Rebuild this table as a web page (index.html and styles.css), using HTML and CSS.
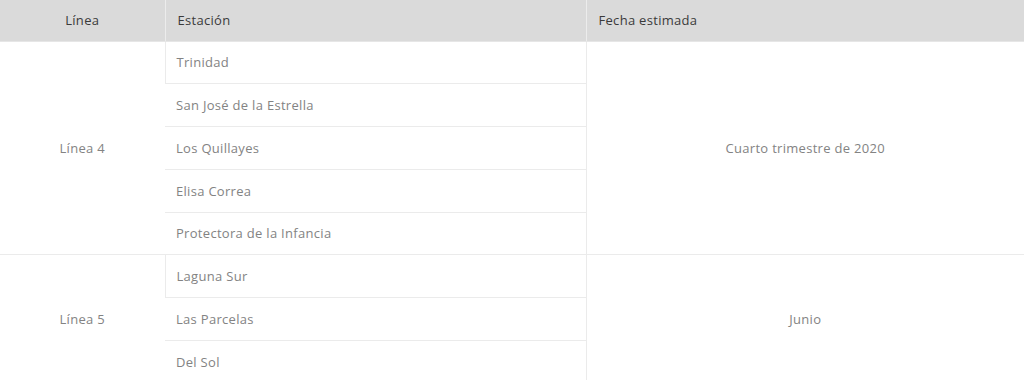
FILE: index.html
```html
<!DOCTYPE html>
<html lang="es">
<head>
<meta charset="utf-8">
<title>Estaciones</title>
<link rel="stylesheet" href="styles.css">
</head>
<body>
<table class="schedule">
  <colgroup>
    <col class="c-linea">
    <col class="c-estacion">
    <col class="c-fecha">
  </colgroup>
  <thead>
    <tr>
      <th class="center">Línea</th>
      <th>Estación</th>
      <th>Fecha estimada</th>
    </tr>
  </thead>
  <tbody>
    <tr>
      <td class="center group" rowspan="5">Línea 4</td>
      <td class="station">Trinidad</td>
      <td class="center group" rowspan="5">Cuarto trimestre de 2020</td>
    </tr>
    <tr><td class="station">San José de la Estrella</td></tr>
    <tr><td class="station">Los Quillayes</td></tr>
    <tr><td class="station">Elisa Correa</td></tr>
    <tr><td class="station">Protectora de la Infancia</td></tr>
    <tr>
      <td class="center group" rowspan="3">Línea 5</td>
      <td class="station">Laguna Sur</td>
      <td class="center group" rowspan="3">Junio</td>
    </tr>
    <tr><td class="station">Las Parcelas</td></tr>
    <tr><td class="station">Del Sol</td></tr>
  </tbody>
</table>
</body>
</html>
```

FILE: styles.css
```css
html, body {
  margin: 0;
  padding: 0;
  background: #ffffff;
}

body {
  font-family: "Open Sans", "Noto Sans", "Liberation Sans", sans-serif;
  font-size: 13px;
  letter-spacing: 0.3px;
}

.schedule {
  width: 1024px;
  border-collapse: collapse;
  table-layout: fixed;
}

.c-linea { width: 165px; }
.c-estacion { width: 421px; }
.c-fecha { width: 438px; }

.schedule th {
  background: #dadada;
  color: #3a3a3a;
  font-weight: 400;
  height: 41px;
  padding: 0 12px;
  text-align: left;
  border-left: 1px solid #ececec;
  border-bottom: 1px solid #e6e6e6;
  box-sizing: border-box;
}

.schedule th:first-child {
  border-left: none;
}

.schedule td {
  color: #838383;
  height: 42.75px;
  padding: 0 11px;
  border-bottom: 1px solid #ebebeb;
  border-left: 1px solid #ebebeb;
  box-sizing: border-box;
}

.schedule td:first-child {
  border-left: none;
}

.schedule .center {
  text-align: center;
}

.schedule td.group {
  padding: 0;
}
```
